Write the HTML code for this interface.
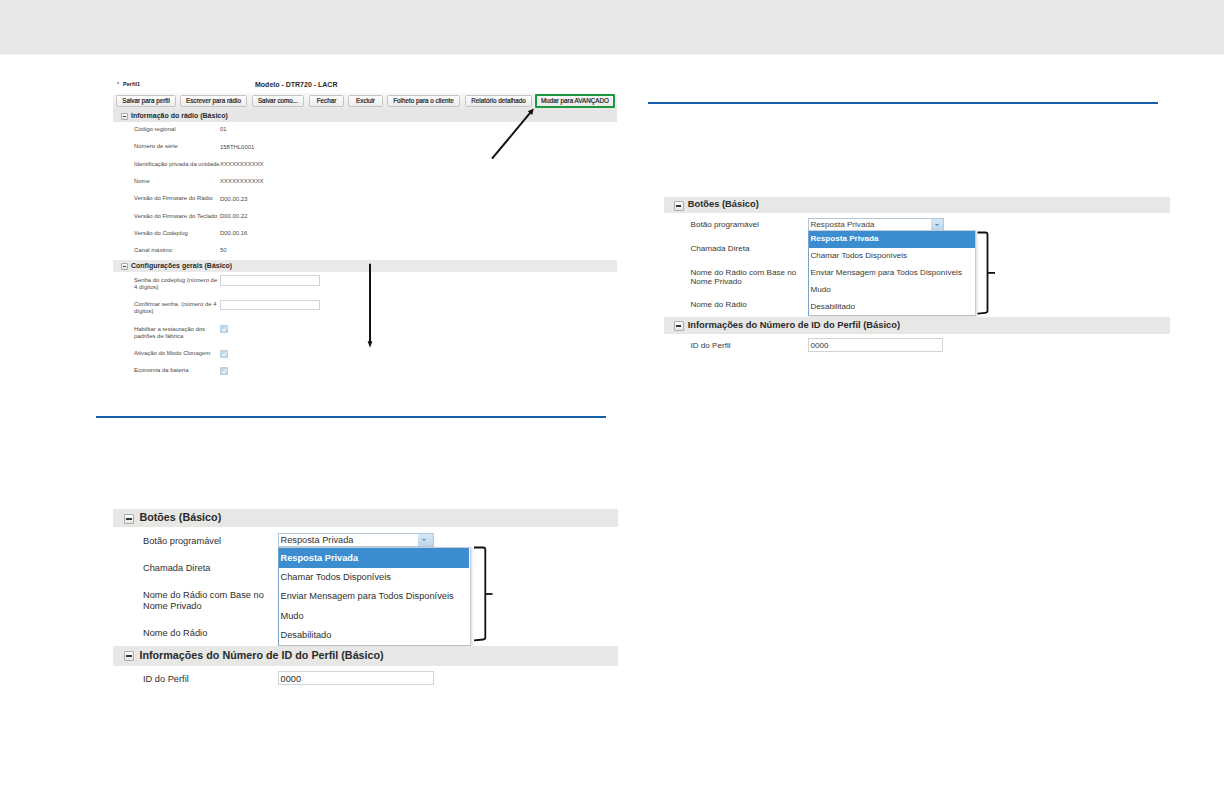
<!DOCTYPE html>
<html lang="pt-BR">
<head>
<meta charset="utf-8">
<title>Perfil</title>
<style>
html,body{margin:0;padding:0;}
body{width:1224px;height:792px;position:relative;overflow:hidden;background:#fff;font-family:"Liberation Sans",Arial,sans-serif;color:#333;}
.abs{position:absolute;}
#topbar{left:0;top:0;width:1224px;height:54px;background:#e9e7e6;border-bottom:1px solid #f6f5f4;}
.t{position:absolute;white-space:nowrap;line-height:1;}
.hr{position:absolute;height:2px;background:#1561ad;}
/* screenshot 1 */
#s1{left:0;top:0;}
.s1l{font-size:5.95px;color:#4a4a4a;}
.btn{position:absolute;top:95px;height:10px;-webkit-text-stroke:0.2px #222;border:1px solid #c4c4c4;border-radius:1.5px;background:linear-gradient(#fdfdfd,#ececec);font-size:6.3px;line-height:10px;text-align:center;color:#222;box-sizing:content-box;white-space:nowrap;}
.bar{position:absolute;background:#e9e9e9;}
.minus{position:absolute;border:1px solid #ababab;background:linear-gradient(#fff,#e6e6e6);border-radius:1px;box-sizing:border-box;}
.minus:after{content:"";position:absolute;left:20%;right:20%;top:50%;height:1px;margin-top:-0.5px;background:#444;}
.inp{position:absolute;border:1px solid #d0d4d9;background:#fff;box-sizing:border-box;}
.chk{position:absolute;width:8px;height:8px;background:#c3d9ea;border:1px solid #b4cde0;box-sizing:border-box;border-radius:1px;}
.chk:after{content:"";position:absolute;left:2px;top:0.3px;width:1.8px;height:3.6px;border:solid #f4f9fc;border-width:0 1.1px 1.1px 0;transform:rotate(40deg);}
.hd2{font-size:10.75px;font-weight:bold;color:#2a2a2a;}
.l2{font-size:9.25px;color:#2e2e2e;}
.hd3{font-size:9.35px;font-weight:bold;color:#2a2a2a;}
.l3{font-size:8.1px;color:#383838;}
.dd{position:absolute;background:#fff;border:1px solid #c3ced9;border-left-color:#7aa3cc;border-bottom-color:#b9bec4;box-sizing:border-box;box-shadow:1px 1px 2px rgba(0,0,0,.15);}
.sel{position:absolute;background:#3b8dd0;}
.ddb{position:absolute;background:linear-gradient(#d6e8f6,#bcd7ec);}
.ddb:after{content:"";position:absolute;left:50%;top:50%;margin:-1px 0 0 -2.5px;border:2.5px solid transparent;border-top:3px solid #4a7fb0;border-bottom:0;}
.m2:after{height:2px;margin-top:-1px;left:15%;right:15%;background:#333;}
.d2:after{margin:-0.8px 0 0 -2.6px;border:2.6px solid transparent;border-top:2.8px solid #5d86b0;border-bottom:0;}
.d3:after{margin:-0.7px 0 0 -2.2px;border:2.2px solid transparent;border-top:2.4px solid #5d86b0;border-bottom:0;}
</style>
</head>
<body>
<div id="topbar" class="abs"></div>

<!-- Screenshot 1 -->
<div class="t" style="left:117px;top:82px;font-size:5.6px;color:#222;">* <b style="margin-left:2.3px">Perfil1</b></div>
<div class="t" style="left:255px;top:80.9px;font-size:7px;font-weight:bold;color:#2a2a2a;">Modelo - DTR720 - LACR</div>
<div class="bar" style="left:113px;top:93px;width:504px;height:29px;background:linear-gradient(to bottom,#f8f8f8 0,#ebebeb 14px,#e6e6e6 16px,#e6e6e6 100%);"></div>
<div class="btn" style="left:116px;width:58px;">Salvar para perfil</div>
<div class="btn" style="left:180px;width:65px;">Escrever para rádio</div>
<div class="btn" style="left:252px;width:50px;">Salvar como...</div>
<div class="btn" style="left:309px;width:33px;">Fechar</div>
<div class="btn" style="left:348px;width:33px;">Excluir</div>
<div class="btn" style="left:387px;width:71px;">Folheto para o cliente</div>
<div class="btn" style="left:465px;width:65px;">Relatório detalhado</div>
<div class="btn" style="left:535px;width:76px;top:94px;height:9.7px;line-height:9.7px;border:2px solid #1c9840;background:linear-gradient(#f7f7f7,#ebebeb);border-radius:1px;">Mudar para AVANÇADO</div>

<div class="minus" style="left:121px;top:113px;width:7px;height:7px;"></div>
<div class="t" style="left:131px;top:111.5px;font-size:7px;font-weight:bold;color:#2a2a2a;">Informação do rádio (Básico)</div>

<div class="t s1l" style="left:134px;top:126.5px;">Código regional</div><div class="t s1l" style="left:220px;top:127px;">01</div>
<div class="t s1l" style="left:134px;top:144px;">Número de série</div><div class="t s1l" style="left:220px;top:144.5px;">158THL0001</div>
<div class="t s1l" style="left:134px;top:161.5px;">Identificação privada da unidade</div><div class="t s1l" style="left:220px;top:161.5px;">XXXXXXXXXXX</div>
<div class="t s1l" style="left:134px;top:179px;">Nome</div><div class="t s1l" style="left:220px;top:179px;">XXXXXXXXXXX</div>
<div class="t s1l" style="left:134px;top:196px;">Versão do Firmware do Rádio</div><div class="t s1l" style="left:220px;top:196.5px;">D00.00.23</div>
<div class="t s1l" style="left:134px;top:213.5px;">Versão do Firmware do Teclado</div><div class="t s1l" style="left:220px;top:213.5px;">D00.00.22</div>
<div class="t s1l" style="left:134px;top:230.5px;">Versão do Codeplug</div><div class="t s1l" style="left:220px;top:231px;">D00.00.16</div>
<div class="t s1l" style="left:134px;top:247.5px;">Canal máximo</div><div class="t s1l" style="left:220px;top:247.5px;">50</div>

<div class="bar" style="left:113px;top:260px;width:504px;height:12px;"></div>
<div class="minus" style="left:121px;top:262.5px;width:7px;height:7px;"></div>
<div class="t" style="left:131px;top:262px;font-size:7px;font-weight:bold;color:#2a2a2a;">Configurações gerais (Básico)</div>

<div class="t s1l" style="left:134px;top:276.7px;line-height:7px;">Senha do codeplug (número de<br>4 dígitos)</div>
<div class="inp" style="left:220px;top:275px;width:100px;height:10.5px;"></div>
<div class="t s1l" style="left:134px;top:300.9px;line-height:7px;">Confirmar senha. (número de 4<br>dígitos)</div>
<div class="inp" style="left:220px;top:299.5px;width:100px;height:10.5px;"></div>
<div class="t s1l" style="left:134px;top:325.7px;line-height:7px;">Habilitar a restauração dos<br>padrões de fábrica</div>
<div class="chk" style="left:220px;top:325px;"></div>
<div class="t s1l" style="left:134px;top:350.5px;">Ativação do Modo Clonagem</div>
<div class="chk" style="left:220px;top:349.5px;"></div>
<div class="t s1l" style="left:134px;top:367.5px;">Economia da bateria</div>
<div class="chk" style="left:220px;top:366.5px;"></div>

<svg class="abs" style="left:0;top:0;" width="1224" height="792" viewBox="0 0 1224 792">
  <g stroke="#111" stroke-width="2" fill="none" stroke-linecap="butt">
    <line x1="492" y1="158.7" x2="530.3" y2="112.7"/>
    <line x1="370" y1="263.8" x2="370" y2="343"/>
  </g>
  <polygon points="533.8,108.5 532.2,115 527.7,111.2" fill="#111"/>
  <polygon points="370,347.8 367.6,341.2 372.4,341.2" fill="#111"/>
  <g stroke="#111" stroke-width="1.8" fill="none">
    <path d="M474,547.5 H483.3 Q485.3,547.5 485.3,549.5 V637.5 Q485.3,639.3 483.3,639.5 L474,640.3"/>
    <line x1="485.3" y1="594" x2="492.5" y2="594"/>
    <path d="M977.5,232.5 H985.5 Q987.5,232.5 987.5,234.5 V310.8 Q987.5,312.6 985.5,312.8 L977.5,313.6"/>
    <line x1="987.5" y1="272.9" x2="995" y2="272.9"/>
  </g>
</svg>

<div class="hr" style="left:96px;top:416px;width:510px;"></div>
<div class="hr" style="left:648px;top:102px;width:510px;"></div>

<!-- Screenshot 2 (bottom-left) -->
<div id="s2">
<div class="bar" style="left:112.5px;top:509px;width:505px;height:18px;background:#e7e7e6;"></div>
<div class="minus m2" style="left:124px;top:513.5px;width:10px;height:10.5px;"></div>
<div class="t hd2" style="left:139.4px;top:512px;">Botões (Básico)</div>
<div class="t l2" style="left:143px;top:537px;">Botão programável</div>
<div class="t l2" style="left:143px;top:564px;">Chamada Direta</div>
<div class="t l2" style="left:143px;top:590px;line-height:10.5px;">Nome do Rádio com Base no<br>Nome Privado</div>
<div class="t l2" style="left:143px;top:629px;">Nome do Rádio</div>
<div class="inp" style="left:277.5px;top:533px;width:156px;height:13.5px;border-color:#b3c6da;"></div>
<div class="t l2" style="left:280.5px;top:535.6px;color:#333;">Resposta Privada</div>
<div class="ddb d2" style="left:417.5px;top:534px;width:15px;height:11.5px;"></div>
<div class="dd" style="left:277.5px;top:546.5px;width:193.5px;height:99.5px;"></div>
<div class="sel" style="left:278.5px;top:547.5px;width:190.5px;height:20px;"></div>
<div class="t l2" style="left:280.5px;top:553.6px;color:#fff;font-weight:bold;">Resposta Privada</div>
<div class="t l2" style="left:280.5px;top:572.9px;">Chamar Todos Disponíveis</div>
<div class="t l2" style="left:280.5px;top:592.2px;">Enviar Mensagem para Todos Disponíveis</div>
<div class="t l2" style="left:280.5px;top:612px;">Mudo</div>
<div class="t l2" style="left:280.5px;top:630.5px;">Desabilitado</div>
<div class="bar" style="left:112.5px;top:646px;width:505px;height:19.5px;background:#e7e7e6;"></div>
<div class="minus m2" style="left:124px;top:650.5px;width:10px;height:10.5px;"></div>
<div class="t hd2" style="left:139.4px;top:649.7px;">Informações do Número de ID do Perfil (Básico)</div>
<div class="t l2" style="left:143px;top:674.5px;">ID do Perfil</div>
<div class="inp" style="left:277.5px;top:671px;width:156px;height:14px;"></div>
<div class="t l2" style="left:280.5px;top:674.5px;">0000</div>
</div>
<!-- Screenshot 3 (right) -->
<div id="s3">
<div class="bar" style="left:664px;top:197px;width:506px;height:16px;background:#e7e7e6;"></div>
<div class="minus m2" style="left:674px;top:201px;width:9.5px;height:9.5px;"></div>
<div class="t hd3" style="left:687.7px;top:200px;">Botões (Básico)</div>
<div class="t l3" style="left:690.5px;top:221.1px;">Botão programável</div>
<div class="t l3" style="left:690.5px;top:244.5px;">Chamada Direta</div>
<div class="t l3" style="left:690.5px;top:267.65px;line-height:9.3px;">Nome do Rádio com Base no<br>Nome Privado</div>
<div class="t l3" style="left:690.5px;top:300.7px;">Nome do Rádio</div>
<div class="inp" style="left:808px;top:218px;width:135.5px;height:12.5px;border-color:#b3c6da;"></div>
<div class="t l3" style="left:810.5px;top:220.5px;color:#444;">Resposta Privada</div>
<div class="ddb d3" style="left:930.5px;top:219px;width:12.5px;height:10.5px;"></div>
<div class="dd" style="left:808px;top:230px;width:167.5px;height:86px;"></div>
<div class="sel" style="left:809px;top:231px;width:165.5px;height:16.8px;"></div>
<div class="t l3" style="left:810.5px;top:235px;color:#fff;font-weight:bold;">Resposta Privada</div>
<div class="t l3" style="left:810.5px;top:252.3px;">Chamar Todos Disponíveis</div>
<div class="t l3" style="left:810.5px;top:269px;">Enviar Mensagem para Todos Disponíveis</div>
<div class="t l3" style="left:810.5px;top:286px;">Mudo</div>
<div class="t l3" style="left:810.5px;top:303px;">Desabilitado</div>
<div class="bar" style="left:664px;top:317px;width:506px;height:17px;background:#e7e7e6;"></div>
<div class="minus m2" style="left:674px;top:321px;width:9.5px;height:9.5px;"></div>
<div class="t hd3" style="left:687.7px;top:320.7px;">Informações do Número de ID do Perfil (Básico)</div>
<div class="t l3" style="left:690.5px;top:341.7px;">ID do Perfil</div>
<div class="inp" style="left:808px;top:338px;width:135px;height:13.5px;"></div>
<div class="t l3" style="left:810.5px;top:341.7px;">0000</div>
</div>
</body>
</html>
